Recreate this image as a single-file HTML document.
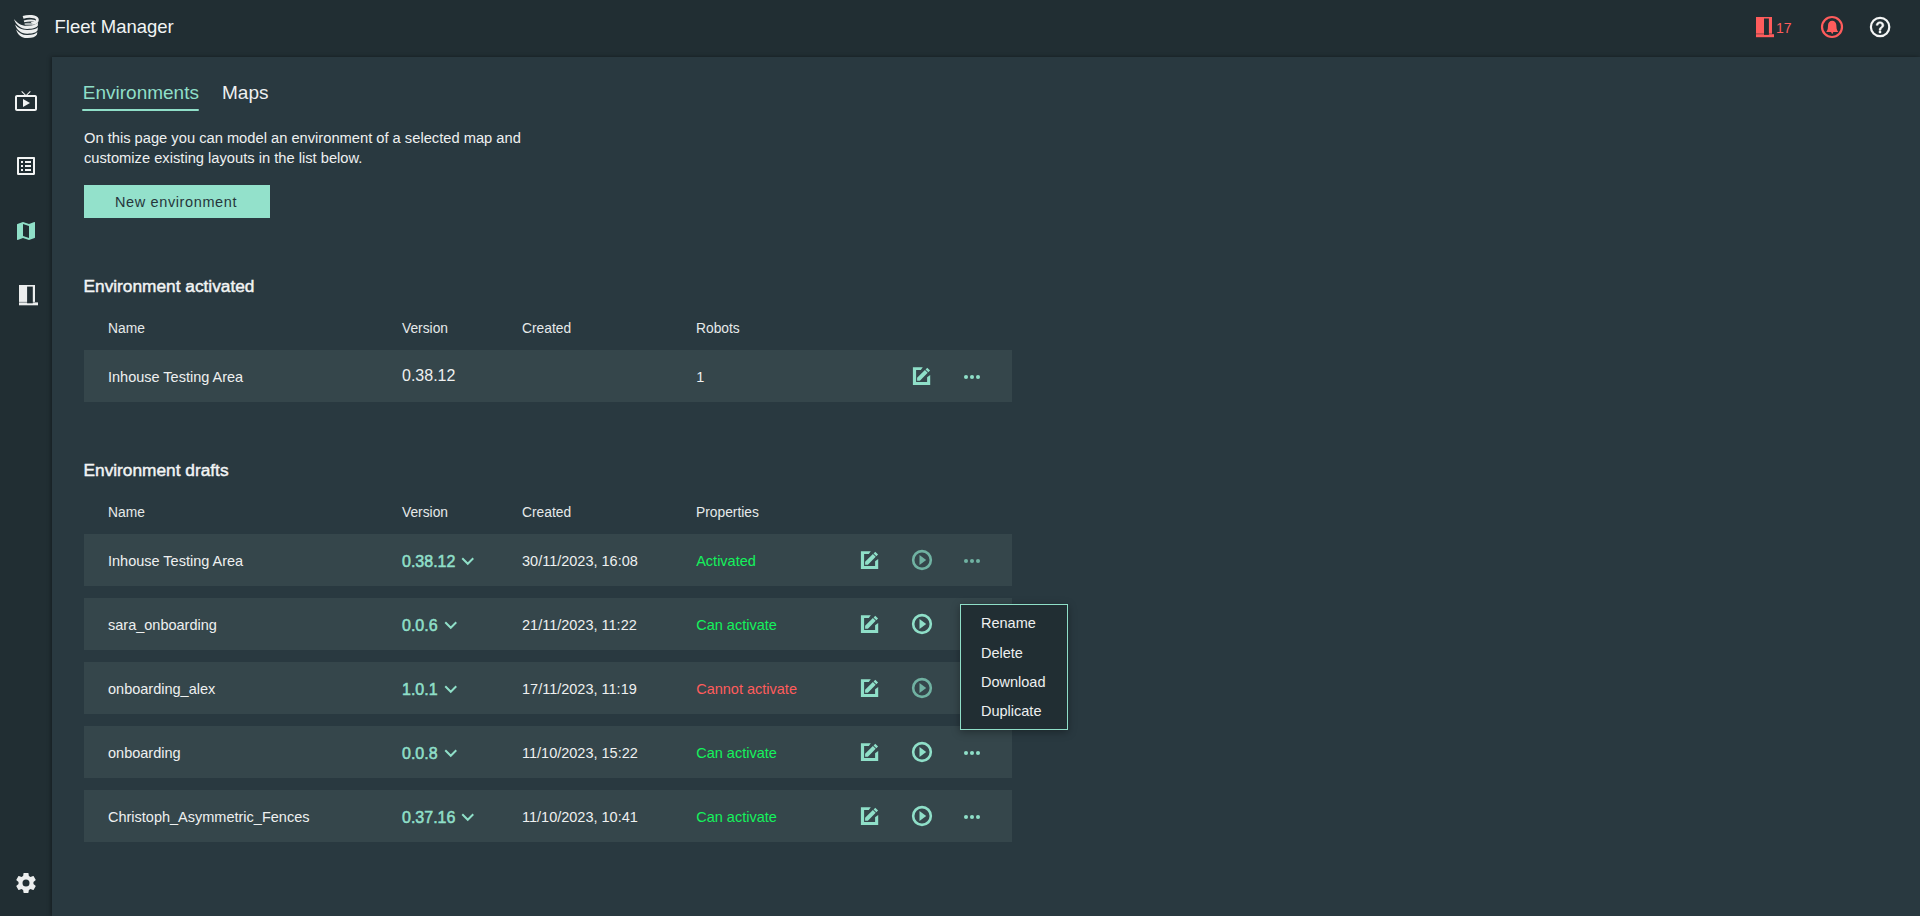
<!DOCTYPE html>
<html><head><meta charset="utf-8">
<style>
html,body{margin:0;padding:0;width:1920px;height:916px;overflow:hidden;background:#212e33;font-family:"Liberation Sans",sans-serif;color:#eef0f0}
.a{position:absolute;white-space:pre;line-height:1}
#hdr{position:absolute;left:0;top:0;width:1920px;height:57px;background:#212e33}
#main{position:absolute;left:52px;top:57px;width:1868px;height:859px;background:#293940;box-shadow:-1px 0 4px rgba(0,0,0,.4)}
.row{position:absolute;left:84px;width:928px;height:52px;background:#35464b}
.th{font-size:13.8px;color:#e6eaea}
.td{font-size:14.5px;color:#eef0f0}
.ver{font-size:16px;color:#8fdfc8;-webkit-text-stroke:.55px #8fdfc8}
.hd{font-size:17.3px;color:#f2f4f4;-webkit-text-stroke:.45px #f2f4f4}
.ok{font-size:14.5px;color:#14f25c}
.bad{font-size:14.5px;color:#ff5c5c}
svg{position:absolute;overflow:visible}
.mi{position:absolute;left:981px;font-size:14.5px;line-height:1;color:#eef0f0;white-space:pre}
</style></head><body>
<div id="hdr"></div>
<div id="main"></div>

<!-- logo -->
<svg style="left:10px;top:12px" width="32" height="30" viewBox="0 0 32 30">
<g fill="#eceeee">
<path d="M3.9 6.9C7.5 11 11 13.6 16.4 13.8C21.5 14 26 12.8 27.9 10.6L27.9 13.6C26.8 16 22 17.1 16.9 17C10.5 16.8 5.8 12.5 3.9 6.9Z"/>
<path d="M5.1 12.6C8 16 11.5 17.8 16.9 17.9C22 18 26 17.2 27.9 15.2L27.6 18.3C26.5 20.8 22 21.8 16.9 21.7C11 21.6 6.6 18.2 5.1 12.6Z"/>
<path d="M6.1 17.4C9 21 12 22.8 16.9 23C22 23.1 25.6 22.2 27.3 20L27 22.6C25.6 25.2 22 26.1 16.9 26C11.5 25.8 7.4 22.5 6.1 17.4Z"/>
</g>
<path d="M13.1 5.4C18.5 3.6 26.2 4.3 27.2 7C28 9.5 26 11 21 11.6" fill="none" stroke="#eceeee" stroke-width="2.8"/>
<path d="M14 9.3C19 8 24.5 8.2 26 9.9" fill="none" stroke="#eceeee" stroke-width="1.9"/>
<ellipse cx="18.5" cy="12" rx="4.2" ry="1.3" fill="#a9b0b1"/>
</svg>
<div class="a" style="left:54.5px;top:18.3px;font-size:18.5px;color:#f2f4f4">Fleet Manager</div>

<!-- header right: door + 17 -->
<svg style="left:1756px;top:16.7px" width="20" height="22" viewBox="0 0 20 22">
<rect x="0" y="0" width="16" height="16.7" fill="#ff5c5c"/>
<rect x="0" y="17.2" width="18" height="3" fill="#ff5c5c"/>
<rect x="8" y="1.5" width="4.9" height="16.4" fill="#212e33"/>
</svg>
<div class="a" style="left:1776px;top:21.1px;font-size:14px;color:#ff5c5c">17</div>
<!-- bell -->
<svg style="left:1820px;top:15px" width="24" height="24" viewBox="0 0 24 24">
<circle cx="12" cy="12" r="10" fill="none" stroke="#ff5c5c" stroke-width="2.2"/>
<path fill="#ff5c5c" d="M12.2 5.7C14.6 5.7 16.2 7.6 16.3 9.8L16.6 13.4C16.8 14.8 17.4 15.8 18.2 16.9H6.2C7 15.8 7.6 14.8 7.8 13.4L8.1 9.8C8.2 7.6 9.8 5.7 12.2 5.7ZM10.9 16.8H13.5L12.2 19.3Z"/>
</svg>
<!-- help -->
<svg style="left:1868px;top:15px" width="24" height="24" viewBox="0 0 24 24">
<circle cx="12.1" cy="12" r="9.2" fill="none" stroke="#f4f6f6" stroke-width="2.2"/>
<path fill="#f4f6f6" stroke="#f4f6f6" stroke-width=".45" d="M11 18h2v-2h-2v2zM12 6.7c-2.21 0-3.9 1.59-3.9 3.6h2c0-1.1.8-1.7 1.9-1.7s1.9.7 1.9 1.7c0 1.8-2.9 1.8-2.9 5h2c0-2.25 2.9-2.6 2.9-5 0-2.11-1.69-3.6-3.9-3.6z"/>
</svg>

<!-- sidebar icons -->
<svg style="left:14px;top:89px" width="24" height="24" viewBox="0 0 24 24"><path fill="#f2f4f4" d="M21 6h-7.59l3.29-3.29L16 2l-4 4-4-4-.71.71L10.59 6H3c-1.1 0-2 .89-2 2v12c0 1.1.9 2 2 2h18c1.1 0 2-.9 2-2V8c0-1.11-.9-2-2-2zm0 14H3V8h18v12zM9 10v8l7-4z"/></svg>
<svg style="left:14px;top:154px" width="24" height="24" viewBox="0 0 24 24"><path fill="#f2f4f4" d="M19 5v14H5V5h14m1.1-2H3.9c-.5 0-.9.4-.9.9v16.2c0 .4.4.9.9.9h16.2c.4 0 .9-.5.9-.9V3.9c0-.5-.5-.9-.9-.9zM11 7h6v2h-6V7zm0 4h6v2h-6v-2zm0 4h6v2h-6zM7 7h2v2H7zm0 4h2v2H7zm0 4h2v2H7z"/></svg>
<svg style="left:14px;top:219px" width="24" height="24" viewBox="0 0 24 24"><path fill="#8fdfc8" fill-rule="evenodd" d="M20.5 3l-.16.03L15 5.1 9 3 3.36 4.9c-.21.07-.36.25-.36.48V20.5c0 .28.22.5.5.5l.16-.03L9 18.9l6 2.1 5.64-1.9c.21-.07.36-.25.36-.48V3.5c0-.28-.22-.5-.5-.5zM15 19l-6-2.11V5l6 2.11V19z"/></svg>
<svg style="left:19px;top:285.4px" width="20" height="22" viewBox="0 0 20 22">
<rect x="0" y="0" width="16" height="16.9" fill="#eceeee"/>
<rect x="0" y="17.4" width="19" height="2.9" fill="#eceeee"/>
<rect x="8.1" y="1.6" width="5.7" height="16.7" fill="#212e33"/>
</svg>
<svg style="left:14px;top:871px" width="24" height="24" viewBox="0 0 24 24"><path fill="#eceeee" d="M12,15.5A3.5,3.5 0 0,1 8.5,12A3.5,3.5 0 0,1 12,8.5A3.5,3.5 0 0,1 15.5,12A3.5,3.5 0 0,1 12,15.5M19.43,12.97C19.47,12.65 19.5,12.33 19.5,12C19.5,11.67 19.47,11.34 19.43,11L21.54,9.37C21.73,9.22 21.78,8.95 21.66,8.73L19.66,5.27C19.54,5.05 19.27,4.96 19.050,5.05L16.56,6.05C16.04,5.66 15.5,5.32 14.87,5.07L14.5,2.42C14.46,2.18 14.25,2 14,2H10C9.75,2 9.54,2.18 9.5,2.42L9.13,5.07C8.5,5.32 7.96,5.66 7.44,6.05L4.95,5.05C4.73,4.96 4.46,5.05 4.34,5.27L2.34,8.73C2.21,8.95 2.27,9.22 2.46,9.37L4.57,11C4.53,11.34 4.5,11.67 4.5,12C4.5,12.33 4.53,12.65 4.57,12.97L2.46,14.63C2.27,14.78 2.21,15.05 2.34,15.27L4.34,18.73C4.46,18.95 4.73,19.030 4.95,18.95L7.44,17.94C7.96,18.34 8.5,18.68 9.13,18.93L9.5,21.58C9.54,21.82 9.75,22 10,22H14C14.25,22 14.46,21.82 14.5,21.58L14.87,18.93C15.5,18.67 16.04,18.34 16.56,17.94L19.05,18.95C19.27,19.03 19.54,18.95 19.66,18.73L21.66,15.27C21.78,15.05 21.73,14.78 21.54,14.63L19.43,12.97Z"/></svg>

<!-- tabs -->
<div class="a" style="left:82.8px;top:82.7px;font-size:19px;color:#8fdfc8">Environments</div>
<div class="a" style="left:222px;top:82.7px;font-size:19px;color:#eef0f0">Maps</div>
<div style="position:absolute;left:82px;top:109px;width:117px;height:2px;border-radius:1px;background:#8fdfc8"></div>

<div class="a" style="left:84px;top:127.5px;font-size:14.7px;line-height:20.8px">On this page you can model an environment of a selected map and
customize existing layouts in the list below.</div>

<div style="position:absolute;left:84px;top:185px;width:186px;height:33px;background:#93e1cb"></div>
<div class="a" style="left:115px;top:194.9px;font-size:14.5px;letter-spacing:.62px;color:#26363b">New environment</div>

<div class="a hd" style="left:83.5px;top:278.3px">Environment activated</div>
<div class="a th" style="left:108px;top:321.7px">Name</div>
<div class="a th" style="left:402px;top:321.7px">Version</div>
<div class="a th" style="left:522px;top:321.7px">Created</div>
<div class="a th" style="left:696px;top:321.7px">Robots</div>

<div class="a hd" style="left:83.5px;top:462.3px">Environment drafts</div>
<div class="a th" style="left:108px;top:505.9px">Name</div>
<div class="a th" style="left:402px;top:505.9px">Version</div>
<div class="a th" style="left:522px;top:505.9px">Created</div>
<div class="a th" style="left:696px;top:505.9px">Properties</div>

<div class="row" style="top:350px"></div>
<div class="a td" style="left:108px;top:369.73px">Inhouse Testing Area</div>
<div class="a" style="left:402px;top:368.46px;font-size:16px;color:#eef0f0">0.38.12</div>
<div class="a td" style="left:696.3px;top:369.73px">1</div>
<svg style="left:908px;top:362px" width="28" height="28" viewBox="0 0 28 28"><path fill="#8fdfc8" d="M4.9 5.35H14.8L12.8 8.1H8.1V19.9H19.1V15.3L22.2 13V22.9H4.9Z"/><path fill="#8fdfc8" d="M9.1 18.65V15.85L16.9 8.05L19.7 10.85L11.9 18.65ZM17.55 7.4L19.25 5.7L22.05 8.5L20.35 10.2Z"/></svg>
<svg style="left:960px;top:371px" width="24" height="12" viewBox="-12 -6 24 12"><circle cx="-6" r="2.05" fill="#8fdfc8"/><circle cx="0" r="2.05" fill="#8fdfc8"/><circle cx="6" r="2.05" fill="#8fdfc8"/></svg>
<div class="row" style="top:534px"></div>
<div class="a td" style="left:108px;top:553.73px">Inhouse Testing Area</div>
<div class="a ver" style="left:402px;top:553.76px">0.38.12</div>
<svg style="left:455.39px;top:548.7px" width="24" height="24" viewBox="0 0 24 24"><path fill="none" stroke="#8fdfc8" stroke-width="2" d="M7.25 9.3L12.75 14.8L18.25 9.3"/></svg>
<div class="a td" style="left:522px;top:553.73px">30/11/2023, 16:08</div>
<div class="a ok" style="left:696.2px;top:553.73px">Activated</div>
<svg style="left:856px;top:546px" width="28" height="28" viewBox="0 0 28 28"><path fill="#8fdfc8" d="M4.9 5.35H14.8L12.8 8.1H8.1V19.9H19.1V15.3L22.2 13V22.9H4.9Z"/><path fill="#8fdfc8" d="M9.1 18.65V15.85L16.9 8.05L19.7 10.85L11.9 18.65ZM17.55 7.4L19.25 5.7L22.05 8.5L20.35 10.2Z"/></svg>
<svg style="left:910px;top:548px" width="24" height="24" viewBox="-12 -12 24 24"><circle r="8.85" fill="none" stroke="#70b2a2" stroke-width="2.6"/><path fill="#70b2a2" d="M-2.5 -4.9L4.2 0L-2.5 4.9Z"/></svg>
<svg style="left:960px;top:555px" width="24" height="12" viewBox="-12 -6 24 12"><circle cx="-6" r="2.05" fill="#70b2a2"/><circle cx="0" r="2.05" fill="#70b2a2"/><circle cx="6" r="2.05" fill="#70b2a2"/></svg>
<div class="row" style="top:598px"></div>
<div class="a td" style="left:108px;top:617.73px">sara_onboarding</div>
<div class="a ver" style="left:402px;top:617.76px">0.0.6</div>
<svg style="left:437.59px;top:612.7px" width="24" height="24" viewBox="0 0 24 24"><path fill="none" stroke="#8fdfc8" stroke-width="2" d="M7.25 9.3L12.75 14.8L18.25 9.3"/></svg>
<div class="a td" style="left:522px;top:617.73px">21/11/2023, 11:22</div>
<div class="a ok" style="left:696.2px;top:617.73px">Can activate</div>
<svg style="left:856px;top:610px" width="28" height="28" viewBox="0 0 28 28"><path fill="#8fdfc8" d="M4.9 5.35H14.8L12.8 8.1H8.1V19.9H19.1V15.3L22.2 13V22.9H4.9Z"/><path fill="#8fdfc8" d="M9.1 18.65V15.85L16.9 8.05L19.7 10.85L11.9 18.65ZM17.55 7.4L19.25 5.7L22.05 8.5L20.35 10.2Z"/></svg>
<svg style="left:910px;top:612px" width="24" height="24" viewBox="-12 -12 24 24"><circle r="8.85" fill="none" stroke="#8fdfc8" stroke-width="2.6"/><path fill="#8fdfc8" d="M-2.5 -4.9L4.2 0L-2.5 4.9Z"/></svg>
<div class="row" style="top:662px"></div>
<div class="a td" style="left:108px;top:681.73px">onboarding_alex</div>
<div class="a ver" style="left:402px;top:681.76px">1.0.1</div>
<svg style="left:437.59px;top:676.7px" width="24" height="24" viewBox="0 0 24 24"><path fill="none" stroke="#8fdfc8" stroke-width="2" d="M7.25 9.3L12.75 14.8L18.25 9.3"/></svg>
<div class="a td" style="left:522px;top:681.73px">17/11/2023, 11:19</div>
<div class="a bad" style="left:696.2px;top:681.73px">Cannot activate</div>
<svg style="left:856px;top:674px" width="28" height="28" viewBox="0 0 28 28"><path fill="#8fdfc8" d="M4.9 5.35H14.8L12.8 8.1H8.1V19.9H19.1V15.3L22.2 13V22.9H4.9Z"/><path fill="#8fdfc8" d="M9.1 18.65V15.85L16.9 8.05L19.7 10.85L11.9 18.65ZM17.55 7.4L19.25 5.7L22.05 8.5L20.35 10.2Z"/></svg>
<svg style="left:910px;top:676px" width="24" height="24" viewBox="-12 -12 24 24"><circle r="8.85" fill="none" stroke="#70b2a2" stroke-width="2.6"/><path fill="#70b2a2" d="M-2.5 -4.9L4.2 0L-2.5 4.9Z"/></svg>
<div class="row" style="top:726px"></div>
<div class="a td" style="left:108px;top:745.73px">onboarding</div>
<div class="a ver" style="left:402px;top:745.76px">0.0.8</div>
<svg style="left:437.59px;top:740.7px" width="24" height="24" viewBox="0 0 24 24"><path fill="none" stroke="#8fdfc8" stroke-width="2" d="M7.25 9.3L12.75 14.8L18.25 9.3"/></svg>
<div class="a td" style="left:522px;top:745.73px">11/10/2023, 15:22</div>
<div class="a ok" style="left:696.2px;top:745.73px">Can activate</div>
<svg style="left:856px;top:738px" width="28" height="28" viewBox="0 0 28 28"><path fill="#8fdfc8" d="M4.9 5.35H14.8L12.8 8.1H8.1V19.9H19.1V15.3L22.2 13V22.9H4.9Z"/><path fill="#8fdfc8" d="M9.1 18.65V15.85L16.9 8.05L19.7 10.85L11.9 18.65ZM17.55 7.4L19.25 5.7L22.05 8.5L20.35 10.2Z"/></svg>
<svg style="left:910px;top:740px" width="24" height="24" viewBox="-12 -12 24 24"><circle r="8.85" fill="none" stroke="#8fdfc8" stroke-width="2.6"/><path fill="#8fdfc8" d="M-2.5 -4.9L4.2 0L-2.5 4.9Z"/></svg>
<svg style="left:960px;top:747px" width="24" height="12" viewBox="-12 -6 24 12"><circle cx="-6" r="2.05" fill="#8fdfc8"/><circle cx="0" r="2.05" fill="#8fdfc8"/><circle cx="6" r="2.05" fill="#8fdfc8"/></svg>
<div class="row" style="top:790px"></div>
<div class="a td" style="left:108px;top:809.73px">Christoph_Asymmetric_Fences</div>
<div class="a ver" style="left:402px;top:809.76px">0.37.16</div>
<svg style="left:455.39px;top:804.7px" width="24" height="24" viewBox="0 0 24 24"><path fill="none" stroke="#8fdfc8" stroke-width="2" d="M7.25 9.3L12.75 14.8L18.25 9.3"/></svg>
<div class="a td" style="left:522px;top:809.73px">11/10/2023, 10:41</div>
<div class="a ok" style="left:696.2px;top:809.73px">Can activate</div>
<svg style="left:856px;top:802px" width="28" height="28" viewBox="0 0 28 28"><path fill="#8fdfc8" d="M4.9 5.35H14.8L12.8 8.1H8.1V19.9H19.1V15.3L22.2 13V22.9H4.9Z"/><path fill="#8fdfc8" d="M9.1 18.65V15.85L16.9 8.05L19.7 10.85L11.9 18.65ZM17.55 7.4L19.25 5.7L22.05 8.5L20.35 10.2Z"/></svg>
<svg style="left:910px;top:804px" width="24" height="24" viewBox="-12 -12 24 24"><circle r="8.85" fill="none" stroke="#8fdfc8" stroke-width="2.6"/><path fill="#8fdfc8" d="M-2.5 -4.9L4.2 0L-2.5 4.9Z"/></svg>
<svg style="left:960px;top:811px" width="24" height="12" viewBox="-12 -6 24 12"><circle cx="-6" r="2.05" fill="#8fdfc8"/><circle cx="0" r="2.05" fill="#8fdfc8"/><circle cx="6" r="2.05" fill="#8fdfc8"/></svg>

<!-- context menu -->
<div style="position:absolute;left:960px;top:604px;width:106px;height:124px;border:1px solid #8fdfc8;background:#212e33;box-shadow:0 2px 8px rgba(0,0,0,.35)"></div>
<div class="mi" style="top:615.7px">Rename</div>
<div class="mi" style="top:645.7px">Delete</div>
<div class="mi" style="top:674.5px">Download</div>
<div class="mi" style="top:704.3px">Duplicate</div>

</body></html>
